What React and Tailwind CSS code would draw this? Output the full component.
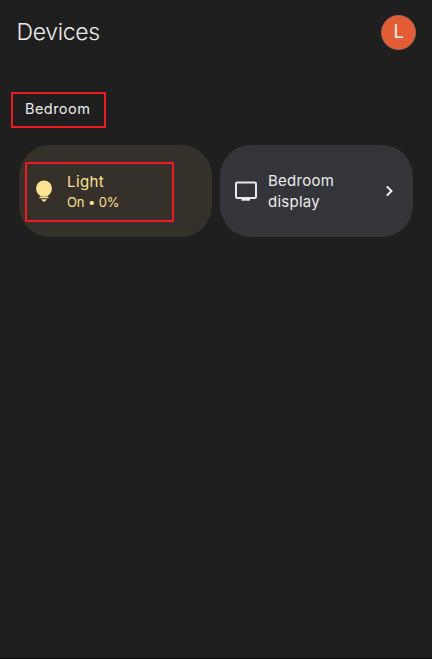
import React from "react";

function BulbIcon() {
  return (
    <svg width="18" height="22" viewBox="0 0 18 22" fill="#fde293" className="shrink-0">
      <circle cx="9" cy="8.500" r="8" />
      <path d="M5 14h8v1.500H5z" />
      <rect x="4.500" y="16.500" width="9" height="1.700" />
      <path d="M6 19.300h6L10 21.500H8z" />
    </svg>
  );
}

function DisplayIcon() {
  return (
    <svg width="22" height="20" viewBox="0 0 22 20" className="shrink-0">
      <rect x="1" y="1.500" width="20" height="15.500" rx="1.200" fill="none" stroke="#e8eaed" strokeWidth="2" />
      <path d="M6.500 17h8.500v2.700H6.500z" fill="#e8eaed" />
    </svg>
  );
}

function Chevron() {
  return (
    <svg width="8" height="12" viewBox="0 0 8 12" fill="none" stroke="#f8f9fa" strokeWidth="1.900" className="shrink-0">
      <path d="M1.800 1.300 6.500 6l-4.700 4.700" />
    </svg>
  );
}

export default function App() {
  return (
    <div className="flex h-[659px] w-[432px] flex-col overflow-hidden border-b border-[#080808] bg-[#1f1f1f] font-['Inter',sans-serif] text-[#ececec]">
      <header className="flex h-[64px] items-center justify-between pl-4 pr-4">
        <h1 className="pl-[0.500px] pt-px text-[23px] font-light leading-none tracking-[-0.350px]">Devices</h1>
        <div className="flex size-[35px] items-center justify-center rounded-full border border-[#a96350] bg-[#e25d35] text-[18px] leading-none text-[#fff4ee]">L</div>
      </header>
      <div className="ml-[11px] mt-[28px] flex h-[36px] w-[95px] items-center border-2 border-[#ed1c24] pb-[2px] pl-3">
        <h2 className="text-[14.500px] leading-none tracking-[0.450px]">Bedroom</h2>
      </div>
      <main className="ml-[19px] mt-[17px] flex gap-2">
        <section className="h-[92px] w-[193px] rounded-[31px] bg-[#35302a] pl-[6px] pt-[17px] text-[#fde293]">
          <div className="flex h-[60px] w-[149px] items-center gap-[14px] border-2 border-[#ed1c24] pb-[2px] pl-2">
            <BulbIcon />
            <div>
              <p className="text-[15px] leading-[21px] tracking-[0.400px]">Light</p>
              <p className="text-[13px] leading-5 tracking-[-0.100px]">On • 0%</p>
            </div>
          </div>
        </section>
        <section className="flex h-[92px] w-[193px] items-center rounded-[31px] bg-[#34353a] pl-[15px] pr-5">
          <DisplayIcon />
          <p className="ml-[11px] w-[90px] text-[15px] leading-[21px] tracking-[0.250px]">Bedroom display</p>
          <div className="ml-auto"><Chevron /></div>
        </section>
      </main>
    </div>
  );
}
